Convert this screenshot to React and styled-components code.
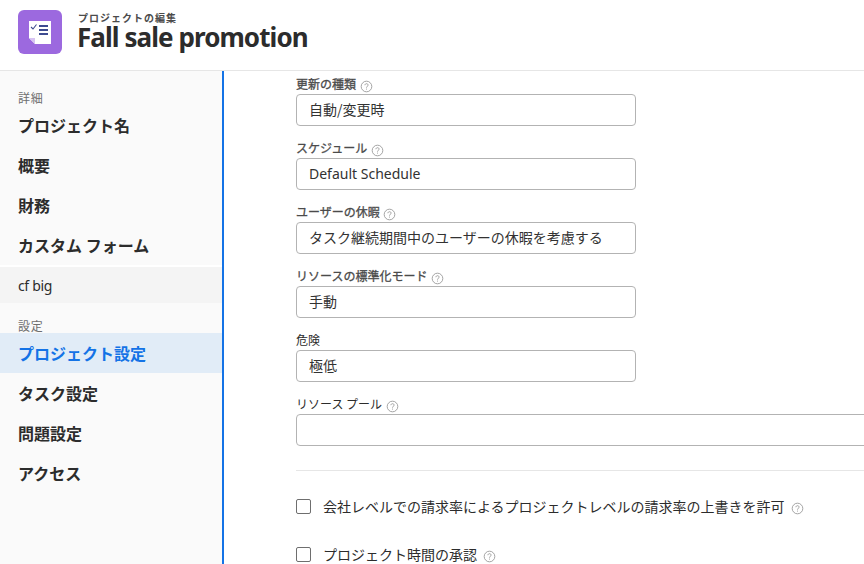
import React from 'react';
import styled, { createGlobalStyle } from 'styled-components';

const Global = createGlobalStyle`
  * { box-sizing: border-box; }
  html, body { margin: 0; overflow: hidden; background: #fff; }
  body { font-family: "Noto Sans CJK JP", sans-serif; color: #2c2c2c; }
`;

const Page = styled.div`
  display: flex;
  flex-direction: column;
  width: 864px;
  height: 564px;
  overflow: hidden;
`;

const Header = styled.header`
  display: flex;
  flex: 0 0 71px;
  align-items: flex-start;
  gap: 16px;
  padding: 10px 18px 0;
  border-bottom: 1px solid #e6e6e6;
`;

const Heading = styled.div`
  display: flex;
  flex-direction: column;
`;

const Eyebrow = styled.div`
  height: 15px;
  font-size: 10px;
  font-weight: 700;
  line-height: 15px;
  letter-spacing: 1px;
  color: #4b4b4b;
`;

const Title = styled.h1`
  margin: 0 0 0 -1px;
  font-family: "Noto Sans", sans-serif;
  font-size: 26px;
  font-weight: 700;
  line-height: 24px;
  letter-spacing: -0.93px;
  white-space: nowrap;
`;

const Body = styled.div`
  display: flex;
  flex: 1;
  min-height: 0;
`;

const Sidebar = styled.nav`
  flex: 0 0 224px;
  background: #fafafa;
  border-right: 2px solid #1473e6;
  padding-top: 17px;
`;

const Section = styled.div`
  height: ${(p) => (p.$last ? 30 : 17)}px;
  padding: ${(p) => (p.$last ? 13 : 0)}px 18px 0;
  font-size: 12px;
  line-height: 19px;
  letter-spacing: 0.8px;
  color: #6e6e6e;
`;

const NavItem = styled.div`
  height: 40px;
  padding-left: 18px;
  font-size: 16px;
  font-weight: 700;
  line-height: 40px;
  color: ${(p) => (p.$active ? '#1473e6' : '#2c2c2c')};
  background: ${(p) => (p.$active ? '#e1ecf7' : 'transparent')};
`;

const SubItem = styled.div`
  height: 38px;
  padding-left: 18px;
  border-top: 2px solid #fff;
  background: #f4f4f4;
  font-family: "Noto Sans", sans-serif;
  font-size: 14px;
  line-height: 37px;
  letter-spacing: -0.35px;
`;

const Content = styled.main`
  flex: 1;
  min-width: 0;
  padding: 5px 0 0 72px;
`;

const Field = styled.div`
  height: 64px;
`;

const Label = styled.div`
  display: flex;
  align-items: center;
  gap: 3.5px;
  height: 18px;
  padding-bottom: 2px;
  font-size: 12px;
  line-height: 16px;
  color: ${(p) => (p.$dark ? '#2c2c2c' : '#4b4b4b')};
  -webkit-text-stroke: ${(p) => (p.$dark ? 0 : 0.3)}px currentColor;
`;

const Input = styled.div`
  width: ${(p) => (p.$wide ? 640 : 340)}px;
  height: 32px;
  padding-left: 12px;
  border: 1px solid #b3b3b3;
  border-radius: 4px;
  font-size: 14px;
  line-height: 28px;
  color: #323232;
`;

const Latin = styled.span`
  font-family: "Noto Sans", sans-serif;
`;

const Divider = styled.hr`
  height: 1px;
  margin: 10px 0 26px;
  border: 0;
  background: #e6e6e6;
`;

const CheckRow = styled.div`
  display: flex;
  align-items: center;
  height: 18px;
  margin-bottom: 30px;
  font-size: 14px;
  line-height: 18px;
  gap: 6px;
  white-space: nowrap;
`;

const Box = styled.span`
  width: 15px;
  height: 15px;
  margin-right: 6px;
  border: 1px solid #6e6e6e;
  border-radius: 2px;
`;

const HelpIcon = styled.svg`
  display: block;
  flex: none;
  width: 13px;
  height: 13px;
  margin-top: 5px;
`;

function Help() {
  return (
    <HelpIcon viewBox="0 0 13 13" fill="none" stroke="#8e8e8e">
      <circle cx="6.5" cy="6.5" r="5.3" strokeWidth="0.8" />
      <path d="M4.9 5.2C4.9 3.2 8.1 3.2 8.1 5.1C8.1 6.3 6.5 6.3 6.5 7.7M6.5 8.6V9.6" strokeWidth="0.8" />
    </HelpIcon>
  );
}

function ProjectIcon() {
  return (
    <svg width="44" height="44" viewBox="0 0 44 44">
      <rect width="44" height="44" rx="6" fill="#9c69df" />
      <path d="M11 11H33V34H17L11 28Z" fill="#fff" />
      <path d="M11 28H17V34Z" fill="#d7c3f2" />
      <path d="M21 16H30M21 20H30M21 24H30" stroke="#3d4b90" strokeWidth="2" />
      <path d="M13 17L15 19L18.5 14.5" fill="none" stroke="#3d4b90" strokeWidth="1.1" />
    </svg>
  );
}

const fields = [
  { label: '更新の種類', value: '自動/変更時', help: true },
  { label: 'スケジュール', value: <Latin>Default Schedule</Latin>, help: true },
  { label: 'ユーザーの休暇', value: 'タスク継続期間中のユーザーの休暇を考慮する', help: true },
  { label: 'リソースの標準化モード', value: '手動', help: true },
  { label: '危険', value: '極低', dark: true },
  { label: 'リソース プール', value: '', help: true, dark: true, wide: true },
];

const checks = [
  '会社レベルでの請求率によるプロジェクトレベルの請求率の上書きを許可',
  'プロジェクト時間の承認',
];

export default function App() {
  return (
    <Page>
      <Global />
      <Header>
        <ProjectIcon />
        <Heading>
          <Eyebrow>プロジェクトの編集</Eyebrow>
          <Title>Fall sale promotion</Title>
        </Heading>
      </Header>
      <Body>
        <Sidebar>
          <Section>詳細</Section>
          {['プロジェクト名', '概要', '財務', 'カスタム フォーム'].map((t) => (
            <NavItem key={t}>{t}</NavItem>
          ))}
          <SubItem>cf big</SubItem>
          <Section $last>設定</Section>
          <NavItem $active>プロジェクト設定</NavItem>
          {['タスク設定', '問題設定', 'アクセス'].map((t) => (
            <NavItem key={t}>{t}</NavItem>
          ))}
        </Sidebar>
        <Content>
          {fields.map((f) => (
            <Field key={f.label}>
              <Label $dark={f.dark}>
                {f.label}
                {f.help && <Help />}
              </Label>
              <Input $wide={f.wide}>{f.value}</Input>
            </Field>
          ))}
          <Divider />
          {checks.map((t) => (
            <CheckRow key={t}>
              <Box />
              {t}
              <Help />
            </CheckRow>
          ))}
        </Content>
      </Body>
    </Page>
  );
}
